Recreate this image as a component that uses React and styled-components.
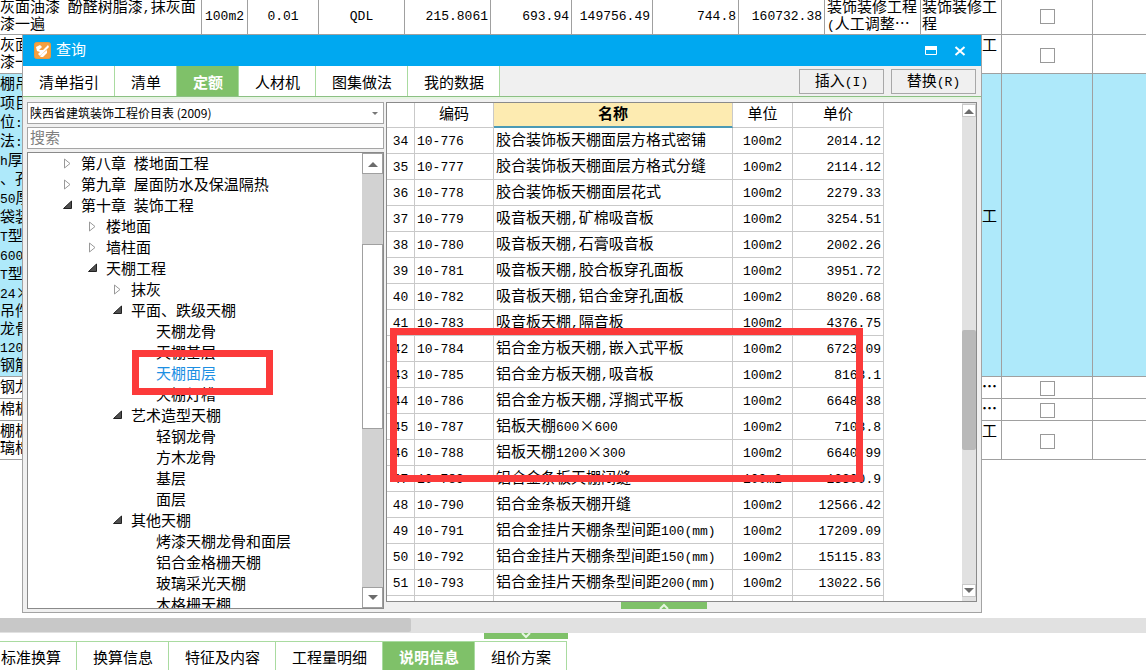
import React, { useState } from "react"
import styled, { createGlobalStyle, css } from "styled-components"

const TREE = [
    { level: 0, text: "第八章 楼地面工程", state: "closed" },
    { level: 0, text: "第九章 屋面防水及保温隔热", state: "closed" },
    { level: 0, text: "第十章 装饰工程", state: "open" },
    { level: 1, text: "楼地面", state: "closed" },
    { level: 1, text: "墙柱面", state: "closed" },
    { level: 1, text: "天棚工程", state: "open" },
    { level: 2, text: "抹灰", state: "closed" },
    { level: 2, text: "平面、跌级天棚", state: "open" },
    { level: 3, text: "天棚龙骨" },
    { level: 3, text: "天棚基层" },
    { level: 3, text: "天棚面层" },
    { level: 3, text: "天棚灯槽" },
    { level: 2, text: "艺术造型天棚", state: "open" },
    { level: 3, text: "轻钢龙骨" },
    { level: 3, text: "方木龙骨" },
    { level: 3, text: "基层" },
    { level: 3, text: "面层" },
    { level: 2, text: "其他天棚", state: "open" },
    { level: 3, text: "烤漆天棚龙骨和面层" },
    { level: 3, text: "铝合金格栅天棚" },
    { level: 3, text: "玻璃采光天棚" },
    { level: 3, text: "木格栅天棚" },
]

const QUOTAS = [
    [34, "10-776", "胶合装饰板天棚面层方格式密铺", "2014.12"],
    [35, "10-777", "胶合装饰板天棚面层方格式分缝", "2114.12"],
    [36, "10-778", "胶合装饰板天棚面层花式", "2279.33"],
    [37, "10-779", "吸音板天棚,矿棉吸音板", "3254.51"],
    [38, "10-780", "吸音板天棚,石膏吸音板", "2002.26"],
    [39, "10-781", "吸音板天棚,胶合板穿孔面板", "3951.72"],
    [40, "10-782", "吸音板天棚,铝合金穿孔面板", "8020.68"],
    [41, "10-783", "吸音板天棚,隔音板", "4376.75"],
    [42, "10-784", "铝合金方板天棚,嵌入式平板", "6723.09"],
    [43, "10-785", "铝合金方板天棚,吸音板", "8163.1"],
    [44, "10-786", "铝合金方板天棚,浮搁式平板", "6648.38"],
    [45, "10-787", "铝板天棚600×600", "7103.8"],
    [46, "10-788", "铝板天棚1200×300", "6640.99"],
    [47, "10-789", "铝合金条板天棚闭缝", "13300.9"],
    [48, "10-790", "铝合金条板天棚开缝", "12566.42"],
    [49, "10-791", "铝合金挂片天棚条型间距100(mm)", "17209.09"],
    [50, "10-792", "铝合金挂片天棚条型间距150(mm)", "15115.83"],
    [51, "10-793", "铝合金挂片天棚条型间距200(mm)", "13022.56"],
]

const TABS = ["清单指引", "清单", "定额", "人材机", "图集做法", "我的数据"]
const BOTTOM_TABS = ["标准换算", "换算信息", "特征及内容", "工程量明细", "说明信息", "组价方案"]

const FEATURE_LINES = ["棚吊", "项目", "位:", "法:", "h厚", "、孔", "50厚", "袋装", "T型", "600", "T型", "24×"]
const FEATURE_TAIL = ["吊件", "龙骨", "120", "钢筋"]

// latin runs are set in a narrower size, × and … take the full CJK width
function Mixed({ children }) {
    return String(children)
        .split(/([\x20-\x7e]+|[×…]+)/)
        .map((part, i) => {
            if (i % 2 === 0) return part
            return /[×…]/.test(part) ? <Wide key={i}>{part}</Wide> : <Latin key={i}>{part}</Latin>
        })
}

function Arrow({ down }) {
    return (
        <svg width="10" height="6" viewBox="0 0 10 6">
            <path d={down ? "M0 0H10L5 5Z" : "M0 6H10L5 1Z"} fill="#6c6c6c" />
        </svg>
    )
}

function TreeArrow({ state }) {
    return (
        <svg width="10" height="15" viewBox="0 0 10 15">
            {state === "open" && <path d="M8.500 1V8.500H0.500Z" fill="#505050" stroke="#222" />}
            {state === "closed" && <path d="M1.500 1L7 5.500L1.500 10Z" fill="#fff" stroke="#999" />}
        </svg>
    )
}

function Chevron({ down }) {
    return (
        <svg width="12" height="6" viewBox="0 0 12 6">
            <path d={down ? "M2 0L6 4L10 0" : "M2 6L6 2L10 6"} fill="none" stroke="#e6f6e0" strokeWidth="2" />
        </svg>
    )
}

function Sheet() {
    const empty = n => Array.from({ length: n }, (_, i) => <td key={i} />)
    const tail = (label, wrap) => (
        <>
            <Cell $near>{wrap ? <>装饰装修工<br />程</> : <>装饰装修<Wide $bold>…</Wide></>}</Cell>
            <Cell $align="center"><Check type="checkbox" aria-label={label} /></Cell>
            <td />
        </>
    )
    return (
        <SheetTable>
            <colgroup>
                {[202, 46, 71, 86, 86, 81, 81, 86, 86, 96, 81, 91].map((w, i) => <Col key={i} $w={w} />)}
                <col />
            </colgroup>
            <tbody>
                <SheetRow $h={38}>
                    <Cell $flush>
                        <Mixed>灰面油漆 酚醛树脂漆,抹灰面</Mixed><br />漆一遍
                    </Cell>
                    <Cell $align="center"><Latin>100m2</Latin></Cell>
                    <Cell $align="center"><Latin>0.01</Latin></Cell>
                    <Cell $align="center"><Latin>QDL</Latin></Cell>
                    <Cell $align="right"><Latin>215.8061</Latin></Cell>
                    <Cell $align="right"><Latin>693.94</Latin></Cell>
                    <Cell $align="right"><Latin>149756.49</Latin></Cell>
                    <Cell $align="right"><Latin>744.8</Latin></Cell>
                    <Cell $align="right"><Latin>160732.38</Latin></Cell>
                    <Cell>装饰装修工程<br /><Mixed>(人工调整…</Mixed></Cell>
                    {tail("第一行", true)}
                </SheetRow>
                <SheetRow $h={39}>
                    <Cell $flush>灰面<br />漆一</Cell>
                    {empty(9)}
                    {tail("第二行", true)}
                </SheetRow>
                <SheetRow $h={303} $selected>
                    <Cell $flush>
                        <Lines $lead={19}>{FEATURE_LINES.map((t, i) => <p key={i}><Mixed>{t}</Mixed></p>)}</Lines>
                        <Lines $lead={18}>{FEATURE_TAIL.map((t, i) => <p key={i}><Mixed>{t}</Mixed></p>)}</Lines>
                    </Cell>
                    {empty(9)}
                    <Cell $near>装饰装修工<br />程</Cell>
                    <td />
                    <td />
                </SheetRow>
                <SheetRow $h={22}>
                    <Cell $flush>钢龙</Cell>
                    {empty(9)}
                    {tail("第四行", false)}
                </SheetRow>
                <SheetRow $h={22}>
                    <Cell $flush>棉板</Cell>
                    {empty(9)}
                    {tail("第五行", false)}
                </SheetRow>
                <SheetRow $h={39}>
                    <Cell $flush>棚板<br />璃棉</Cell>
                    {empty(9)}
                    {tail("第六行", true)}
                </SheetRow>
            </tbody>
        </SheetTable>
    )
}

function QueryDialog() {
    const [tab, setTab] = useState("定额")
    const [node, setNode] = useState("天棚面层")
    return (
        <Dialog role="dialog" aria-labelledby="query-title">
            <TitleBar>
                <svg width="17" height="17" viewBox="0 0 17 17">
                    <rect x="0.500" y="0.500" width="16" height="16" rx="2" fill="#f5a040" stroke="#e89a3c" />
                    <path d="M2 5L6 3L8 5L5 8H9L14 3L15 5L9 11L6 14L4 12L6 10L3 9Z" fill="#fff" />
                    <path d="M8 12L13 8V11L9 15H6Z" fill="#fff" />
                </svg>
                <h1 id="query-title">查询</h1>
                <WindowButton type="button" aria-label="最大化">
                    <svg width="12" height="9" viewBox="0 0 12 9">
                        <path d="M0.500 0.500H11.500V8.500H0.500Z" fill="none" stroke="#fff" />
                        <path d="M0 0H12V4H0Z" fill="#fff" />
                    </svg>
                </WindowButton>
                <WindowButton type="button" aria-label="关闭">
                    <svg width="12" height="10" viewBox="0 0 12 10">
                        <path d="M1.500 1L10.500 9M10.500 1L1.500 9" stroke="#fff" strokeWidth="2" />
                    </svg>
                </WindowButton>
            </TitleBar>
            <TabBar>
                {TABS.map(t => (
                    <Tab key={t} type="button" $active={t === tab} onClick={() => setTab(t)}>{t}</Tab>
                ))}
                <Actions>
                    <ActionButton type="button"><Mixed>插入(I)</Mixed></ActionButton>
                    <ActionButton type="button"><Mixed>替换(R)</Mixed></ActionButton>
                </Actions>
            </TabBar>
            <Body>
                <Side>
                    <SelectBox>
                        <select aria-label="定额库">
                            <option>陕西省建筑装饰工程价目表 (2009)</option>
                        </select>
                        <svg width="6" height="4" viewBox="0 0 6 4"><path d="M0 0H6L3 3Z" fill="#777" /></svg>
                    </SelectBox>
                    <Search type="text" placeholder="搜索" aria-label="搜索" />
                    <TreeBox>
                        <TreeList>
                            {TREE.map((n, i) => (
                                <TreeNode key={i} $level={n.level} $active={n.text === node} onClick={() => setNode(n.text)}>
                                    <i><TreeArrow state={n.state} /></i>
                                    <Mixed>{n.text}</Mixed>
                                </TreeNode>
                            ))}
                        </TreeList>
                        <TreeScroll>
                            <button type="button" aria-label="向上滚动"><Arrow /></button>
                            <Track $n={70} />
                            <TreeThumb />
                            <Track $n={158} />
                            <button type="button" aria-label="向下滚动"><Arrow down /></button>
                        </TreeScroll>
                    </TreeBox>
                </Side>
                <Main>
                    <QuotaBox>
                        <QuotaArea>
                            <QuotaTable>
                                <colgroup>
                                    {[28, 79, 239, 60, 91].map((w, i) => <Col key={i} $w={w} />)}
                                </colgroup>
                                <thead>
                                    <tr>
                                        <th aria-label="序号" />
                                        <th>编码</th>
                                        <SortedTh>名称</SortedTh>
                                        <th>单位</th>
                                        <th>单价</th>
                                    </tr>
                                </thead>
                                <tbody>
                                    {QUOTAS.map(([no, code, name, price]) => (
                                        <tr key={no}>
                                            <QuotaCell $align="center" $tight><Latin>{no}</Latin></QuotaCell>
                                            <QuotaCell><Latin>{code}</Latin></QuotaCell>
                                            <QuotaCell><Mixed>{name}</Mixed></QuotaCell>
                                            <QuotaCell $align="center"><Latin>100m2</Latin></QuotaCell>
                                            <QuotaCell $align="right"><Latin>{price}</Latin></QuotaCell>
                                        </tr>
                                    ))}
                                    <tr><td /><td /><td /><td /><td /></tr>
                                </tbody>
                            </QuotaTable>
                        </QuotaArea>
                        <QuotaScroll>
                            <button type="button" aria-label="向上滚动"><Arrow /></button>
                            <Track $n={213} />
                            <QuotaThumb />
                            <Track $n={134} />
                            <button type="button" aria-label="向下滚动"><Arrow down /></button>
                        </QuotaScroll>
                    </QuotaBox>
                    <Handle type="button" aria-label="展开" $w={86} $h={7}><Chevron /></Handle>
                </Main>
            </Body>
        </Dialog>
    )
}

export default function App() {
    const [tab, setTab] = useState("说明信息")
    return (
        <>
            <GlobalStyle />
            <Page lang="zh-CN">
                <SheetArea><Sheet /></SheetArea>
                <HScroll><span /></HScroll>
                <Splitter>
                    <Handle type="button" aria-label="收起" $w={84} $h={6}><Chevron down /></Handle>
                </Splitter>
                <BottomTabs>
                    {BOTTOM_TABS.map(t => (
                        <BottomTab key={t} type="button" $active={t === tab} onClick={() => setTab(t)}>{t}</BottomTab>
                    ))}
                </BottomTabs>
                <QueryDialog />
                <Marker $x={132} $y={350} $w={141} $h={45} />
                <Marker $x={390} $y={328} $w={473} $h={154} />
            </Page>
        </>
    )
}

const GlobalStyle = createGlobalStyle`
*{
    box-sizing:border-box;
    margin:0;
    padding:0;
}
body{
    background-color:#fff;
    color:#000;
    font-family:"Liberation Mono","Noto Sans CJK SC",monospace;
    font-size:15px;
    line-height:17px;
}
button,input,select{
    font:inherit;
    color:inherit;
    border-radius:0;
}
svg{
    display:block;
}
`

const Latin = styled.span`
font-size:13px;
white-space:pre;
`

const Wide = styled.span`
font-family:"Noto Sans CJK SC",sans-serif;
font-weight:${p => (p.$bold ? "bold" : "normal")};
line-height:1px;
`

const Page = styled.div`
position:relative;
height:100vh;
display:flex;
flex-direction:column;
overflow:hidden;
`

const SheetArea = styled.div`
flex:1;
min-height:0;
overflow:hidden;
`

const SheetTable = styled.table`
width:100%;
margin-top:-3px;
table-layout:fixed;
border-collapse:separate;
border-spacing:0;
td{
    border-right:1px solid #a0a0a0;
    border-bottom:1px solid #a0a0a0;
}
td:last-child{
    border-right:none;
}
`

const Col = styled.col`
width:${p => p.$w}px;
`

const SheetRow = styled.tr`
height:${p => p.$h}px;
background-color:${p => (p.$selected ? "#aee9fa" : "#fff")};
`

const Cell = styled.td`
padding:${p => (p.$flush ? "2px 0 0" : p.$near ? "2px 1px 0" : "2px 2px 0")};
text-align:${p => p.$align || "left"};
vertical-align:middle;
white-space:nowrap;
overflow:hidden;
`

const Lines = styled.div`
p{
    line-height:${p => p.$lead}px;
}
`

const Check = styled.input`
appearance:none;
display:block;
width:15px;
height:15px;
margin:0 auto;
border:1px solid #999;
background-color:#fff;
`

const HScroll = styled.div`
height:15px;
background-color:#e1e1e1;
span{
    display:block;
    width:411px;
    height:14px;
    border-radius:0 2px 2px 0;
    background-color:#c8c8c8;
}
`

const Splitter = styled.div`
height:8px;
padding-left:484px;
`

const Handle = styled.button`
display:flex;
align-items:center;
justify-content:center;
width:${p => p.$w}px;
height:${p => p.$h}px;
border:none;
background-color:#7fc169;
`

const tabColors = css`
border:none;
border-right:1px solid #a9dba0;
background-color:${p => (p.$active ? "#7fc169" : "#fff")};
color:${p => (p.$active ? "#fff" : "#000")};
font-weight:${p => (p.$active ? "bold" : "normal")};
white-space:nowrap;
`

const BottomTabs = styled.nav`
display:flex;
height:29px;
`

const BottomTab = styled.button`
${tabColors}
padding:6px 15px 0 16px;
border-top:1px solid #a9dba0;
&:first-child{
    padding-left:1px;
}
`

const Dialog = styled.section`
position:absolute;
left:22px;
top:35px;
right:164px;
bottom:57px;
display:flex;
flex-direction:column;
border:1px solid #a3a3a3;
border-top:none;
background-color:#f0f0f0;
`

const TitleBar = styled.header`
display:flex;
align-items:center;
height:31px;
padding:0 11px;
background-color:#00a8f0;
color:#fff;
h1{
    flex:1;
    margin-left:5px;
    padding-top:2px;
    font-size:15px;
    font-weight:normal;
}
`

const WindowButton = styled.button`
display:flex;
align-items:center;
justify-content:center;
width:20px;
height:20px;
margin-left:9px;
border:none;
background:none;
`

const TabBar = styled.nav`
display:flex;
height:31px;
border-bottom:1px solid #8cc084;
`

const Tab = styled.button`
${tabColors}
padding:6px 15px 0 16px;
`

const Actions = styled.div`
display:flex;
flex:1;
align-items:center;
justify-content:flex-end;
gap:7px;
padding-right:5px;
`

const ActionButton = styled.button`
width:85px;
height:25px;
padding-top:2px;
border:1px solid #a8a8a8;
background-color:#f0f0f0;
`

const Body = styled.div`
flex:1;
display:flex;
gap:2px;
min-height:0;
padding:3px 4px 3px;
border-top:2px solid #e6f4e2;
`

const Side = styled.div`
display:flex;
flex-direction:column;
gap:3px;
width:357px;
`

const SelectBox = styled.div`
position:relative;
height:22px;
border:1px solid #a5a5a5;
background-color:#fff;
select{
    appearance:none;
    display:block;
    width:100%;
    height:18px;
    padding:0 2px;
    border:none;
    background-color:transparent;
    font-family:"Noto Sans CJK SC",sans-serif;
    font-size:12px;
}
svg{
    position:absolute;
    right:5px;
    top:9px;
    pointer-events:none;
}
`

const Search = styled.input`
height:22px;
padding:2px 2px 0;
border:1px solid #a5a5a5;
background-color:#fff;
&::placeholder{
    color:#808080;
}
`

const TreeBox = styled.div`
flex:1;
display:flex;
min-height:0;
border:1px solid #8a8a8a;
background-color:#fff;
overflow:hidden;
`

const TreeList = styled.ul`
flex:1;
list-style-type:none;
padding-top:1px;
`

const TreeNode = styled.li`
display:flex;
align-items:center;
height:21px;
padding-top:2px;
padding-left:${p => 35 + p.$level * 25}px;
color:${p => (p.$active ? "#1c8fe3" : "#000")};
cursor:default;
i{
    width:18px;
}
`

const Track = styled.div`
flex:${p => p.$n} 1 0px;
`

const TreeScroll = styled.div`
display:flex;
flex-direction:column;
width:21px;
background-color:#d2d2d2;
button{
    display:flex;
    align-items:center;
    justify-content:center;
    height:21px;
    border:1px solid #a0a0a0;
    background-color:#fff;
}
`

const TreeThumb = styled.div`
height:185px;
border:1px solid #a0a0a0;
background-color:#fff;
`

const Main = styled.div`
flex:1;
display:flex;
flex-direction:column;
align-items:center;
min-width:0;
>button{
    margin-right:36px;
}
`

const QuotaBox = styled.div`
flex:1;
display:flex;
width:100%;
min-height:0;
border:1px solid #8a8a8a;
background-color:#fff;
`

const QuotaArea = styled.div`
flex:1;
overflow:hidden;
`

const QuotaTable = styled.table`
width:497px;
table-layout:fixed;
border-collapse:separate;
border-spacing:0;
th,td{
    height:26px;
    border-right:1px solid #c9c9c9;
    border-bottom:1px solid #c9c9c9;
}
th{
    height:25px;
    padding-top:1px;
    font-weight:normal;
}
`

const SortedTh = styled.th`
&&{
    border-bottom:2px solid #4b9ab5;
    background-color:#fdebb1;
    font-weight:bold;
}
`

const QuotaCell = styled.td`
padding:${p => (p.$tight ? "2px 0 0" : "2px 2px 0")};
text-align:${p => p.$align || "left"};
white-space:nowrap;
overflow:hidden;
`

const QuotaScroll = styled.div`
display:flex;
flex-direction:column;
width:14px;
padding:1px 0 4px;
background-color:#e1e1e1;
button{
    display:flex;
    align-items:center;
    justify-content:center;
    height:13px;
    border:1px solid #c8c8c8;
    background-color:#fff;
}
`

const QuotaThumb = styled.div`
height:120px;
border-radius:2px;
background-color:#b9b9b9;
`

const Marker = styled.div`
position:absolute;
left:${p => p.$x}px;
top:${p => p.$y}px;
width:${p => p.$w}px;
height:${p => p.$h}px;
border:7px solid #fc3a3a;
pointer-events:none;
`
